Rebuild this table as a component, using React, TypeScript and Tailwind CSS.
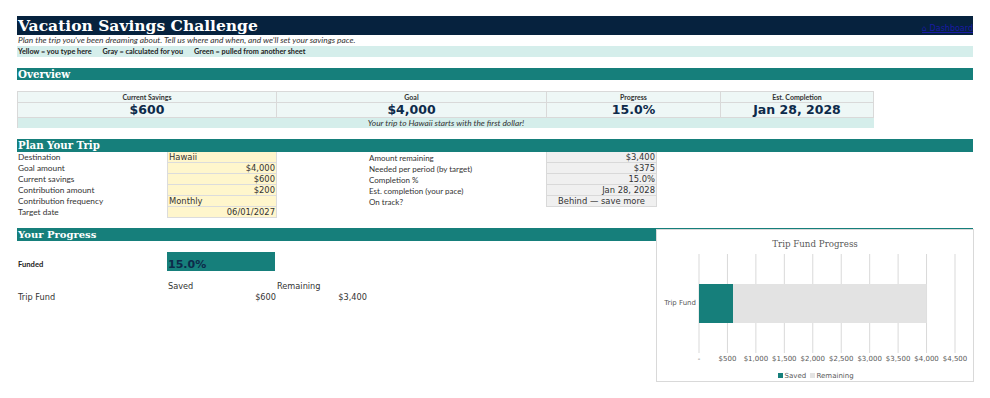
import React from "react";

const lato = { fontFamily: "Lato, 'Open Sans', sans-serif" };
const dv = { fontFamily: "'DejaVu Sans', Verdana, sans-serif" };
const serif = { fontFamily: "'DejaVu Serif', 'Liberation Serif', serif" };

function Chart() {
  const x0 = 42;
  const step = 256 / 9;
  const labels = ["-", "$500", "$1,000", "$1,500", "$2,000", "$2,500", "$3,000", "$3,500", "$4,000", "$4,500"];
  return (
    <div className="absolute left-[656px] top-[229px] w-[318px] h-[153px] bg-white border border-[#d9d9d9]">
      <svg width="316" height="151" viewBox="0 0 316 151">
        <text x="158" y="16.5" textAnchor="middle" fontSize="8.7" fill="#595959" style={serif}>
          Trip Fund Progress
        </text>
        {labels.map((l, i) => (
          <line key={"g" + i} x1={x0 + i * step} x2={x0 + i * step} y1="24" y2="123" stroke="#d9d9d9" strokeWidth="1" />
        ))}
        <rect x={x0} y="54" width={256 * (600 / 4500)} height="39" fill="#167f7b" />
        <rect x={x0 + 256 * (600 / 4500)} y="54" width={256 * (3400 / 4500)} height="39" fill="#e3e3e3" />
        <text x="39" y="75" textAnchor="end" fontSize="7" fill="#595959" style={dv}>
          Trip Fund
        </text>
        {labels.map((l, i) => (
          <text key={"t" + i} x={x0 + i * step} y="131" textAnchor="middle" fontSize="7" fill="#595959" style={dv}>
            {l}
          </text>
        ))}
        <rect x="121" y="143" width="5" height="5" fill="#167f7b" />
        <text x="127.5" y="148" fontSize="7" fill="#595959" style={dv}>
          Saved
        </text>
        <rect x="153" y="143" width="5" height="5" fill="#e3e3e3" />
        <text x="159.5" y="148" fontSize="7" fill="#595959" style={dv}>
          Remaining
        </text>
      </svg>
    </div>
  );
}

function SectionHeader({ title, h, size }: { title: string; h: string; size: string }) {
  return (
    <div className={`${h} bg-[#167f7b] flex items-center px-[1px]`}>
      <span className={`text-white font-bold ${size} leading-none`} style={serif}>
        {title}
      </span>
    </div>
  );
}

export default function App() {
  const plan: [string, string, boolean][] = [
    ["Destination", "Hawaii", false],
    ["Goal amount", "$4,000", true],
    ["Current savings", "$600", true],
    ["Contribution amount", "$200", true],
    ["Contribution frequency", "Monthly", false],
    ["Target date", "06/01/2027", true],
  ];
  const calc: [string, string, boolean][] = [
    ["Amount remaining", "$3,400", true],
    ["Needed per period (by target)", "$375", true],
    ["Completion %", "15.0%", true],
    ["Est. completion (your pace)", "Jan 28, 2028", true],
    ["On track?", "Behind — save more", false],
  ];
  return (
    <div className="w-[990px] h-[398px] bg-white relative overflow-hidden">
      <div className="pl-[17px] pt-[16px] w-[973px]">
        {/* Title */}
        <div className="h-[19px] bg-[#06223e] flex justify-between items-end pl-[1px]">
          <span className="text-white font-bold text-[15.5px] leading-[19px]" style={serif}>
            Vacation Savings Challenge
          </span>
          <a className="text-[#1a1aa6] underline text-[8px] leading-[10px] mb-[1px]" style={dv}>
            ⌂ Dashboard
          </a>
        </div>
        <div className="h-[11px] flex items-center pl-[1px]">
          <span className="italic text-[8.4px] leading-none text-[#333]" style={lato}>
            Plan the trip you've been dreaming about. Tell us where and when, and we'll set your savings pace.
          </span>
        </div>
        <div className="h-[11px] bg-[#d5eeeb] flex items-center pl-[1px] gap-[11px] font-bold text-[7.3px] leading-none text-[#222]" style={lato}>
          <span>Yellow = you type here</span>
          <span>Gray = calculated for you</span>
          <span>Green = pulled from another sheet</span>
        </div>
        <div className="h-[11px]" />
        <SectionHeader title="Overview" h="h-[12px]" size="text-[10.3px]" />
        <div className="h-[11px]" />
        {/* Overview table */}
        <div className="w-[857px] border-t border-l border-[#d9d9d9]">
          <div className="grid grid-cols-[259px_270px_174px_153px]">
            {["Current Savings", "Goal", "Progress", "Est. Completion"].map((h) => (
              <div key={h} className="h-[11px] bg-[#eef7f6] border-r border-b border-[#d9d9d9] flex items-center justify-center">
                <span className="font-bold text-[7px] leading-none text-[#333]" style={lato}>
                  {h}
                </span>
              </div>
            ))}
            {["$600", "$4,000", "15.0%", "Jan 28, 2028"].map((v) => (
              <div key={v} className="h-[15px] bg-[#eef7f6] border-r border-b border-[#d9d9d9] flex items-center justify-center">
                <span className="font-bold text-[12.5px] leading-none text-[#0d2a4a]" style={dv}>
                  {v}
                </span>
              </div>
            ))}
          </div>
          <div className="h-[10px] bg-[#d5eeeb] flex items-center justify-center">
            <span className="italic text-[8.4px] leading-none text-[#333]" style={lato}>
              Your trip to Hawaii starts with the first dollar!
            </span>
          </div>
        </div>
        <div className="h-[11px]" />
        <SectionHeader title="Plan Your Trip" h="h-[13px]" size="text-[10.2px]" />
        {/* Plan rows */}
        <div className="flex">
          <div className="flex flex-col">
            {plan.map(([l, v, right]) => (
              <div key={l} className="flex h-[11px]">
                <div className="w-[150px] flex items-center pl-[1px] text-[8.3px] leading-none text-[#333]" style={lato}>
                  {l}
                </div>
                <div
                  className={`w-[110px] bg-[#fff6cc] border-x border-b border-[#dcdcdc] flex items-center px-[1px] text-[8.4px] leading-none text-[#333] ${
                    right ? "justify-end" : "justify-start"
                  }`}
                  style={dv}
                >
                  {v}
                </div>
              </div>
            ))}
          </div>
          <div className="w-[92px]" />
          <div className="flex flex-col">
            {calc.map(([l, v, right]) => (
              <div key={l} className="flex h-[11px]">
                <div className="w-[177px] flex items-center text-[8px] leading-none text-[#333]" style={lato}>
                  {l}
                </div>
                <div
                  className={`w-[111px] bg-[#f0f0f0] border-x border-b border-[#d9d9d9] flex items-center px-[1px] text-[8.4px] leading-none text-[#333] ${
                    right ? "justify-end" : "justify-center"
                  }`}
                  style={dv}
                >
                  {v}
                </div>
              </div>
            ))}
          </div>
        </div>
        <div className="h-[10px]" />
        <SectionHeader title="Your Progress" h="h-[13px]" size="text-[10px]" />
        <div className="h-[11px]" />
        <div className="flex h-[19px]">
          <div className="w-[150px] flex items-end pb-[2px] pl-[1px] font-bold text-[7.6px] leading-none text-[#222]" style={lato}>
            Funded
          </div>
          <div className="w-[108px] bg-[#167f7b] flex items-end pb-[1px] pl-[1px]">
            <span className="font-bold text-[11px] leading-none text-[#0d2a4a]" style={dv}>
              15.0%
            </span>
          </div>
        </div>
        <div className="h-[10px]" />
        <div className="flex h-[11px] items-center text-[8.2px] leading-none text-[#333]" style={dv}>
          <div className="w-[150px]" />
          <div className="w-[110px] pl-[1px]">Saved</div>
          <div className="w-[91px]">Remaining</div>
        </div>
        <div className="flex h-[11px] items-center text-[8.2px] leading-none text-[#333]" style={dv}>
          <div className="w-[150px] pl-[1px]">Trip Fund</div>
          <div className="w-[109px] text-right">$600</div>
          <div className="w-[91px] text-right">$3,400</div>
        </div>
      </div>
      <Chart />
    </div>
  );
}
